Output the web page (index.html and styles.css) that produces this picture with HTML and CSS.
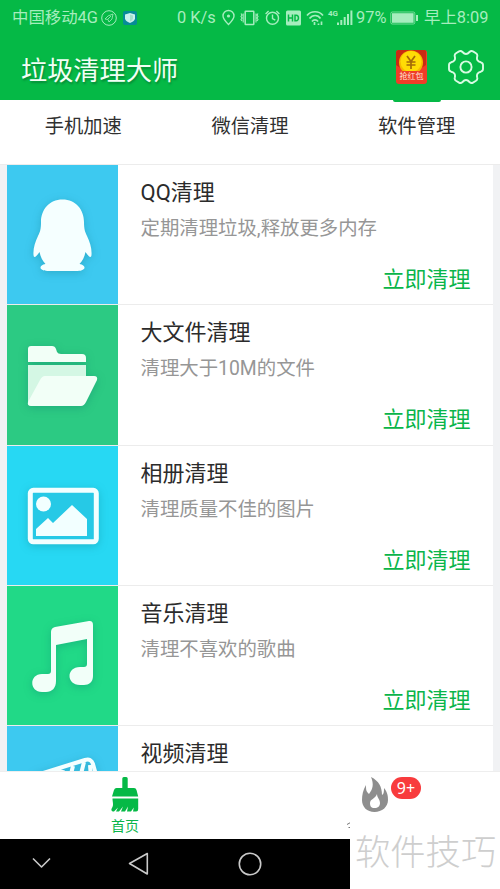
FILE: index.html
```html
<!DOCTYPE html>
<html lang="zh-CN">
<head>
<meta charset="utf-8">
<title>垃圾清理大师</title>
<link rel="stylesheet" href="styles.css">
</head>
<body>
<div class="phone">
  <header class="header">
    <div class="status">
      <span>中国移动4G</span>
      <svg width="17" height="18" viewBox="0 0 17 18" fill="none" stroke="currentColor"><circle cx="8" cy="9" r="7.300"/><path d="M12 5 7 7 4 10l3 .5L8 13l3-3zM7 10l3-3" stroke-width=".8"/></svg>
      <svg width="16" height="18" viewBox="0 0 16 18"><rect x="1" y="2" width="14" height="14" rx="2" fill="#078b97"/><path d="M8 4l5 1.500v3.800c0 2-2 3.600-5 4.800-3-1.200-5-2.800-5-4.800V5.500z" fill="#c9f1ed"/><path d="M8 5.500v7c2-1 3-2 3-3.500V6.500z" fill="#a4dfcd"/></svg>
      <span>0 K/s</span>
      <svg width="14" height="18" viewBox="0 0 14 18" fill="none" stroke="currentColor" stroke-width="1.400"><path d="M6.500 15.500C3 12 1 9.500 1 7a5.500 5.500 0 0 1 11 0c0 2.500-2 5-5.500 8.500z"/><circle cx="6.500" cy="7" r="1.600" fill="currentColor" stroke="none"/></svg>
      <svg width="19" height="18" viewBox="0 0 19 18" fill="none" stroke="currentColor" stroke-width="1.500"><rect x="5.200" y="2.200" width="8.600" height="13.300" rx=".5"/><path d="M1 4.500l1 1.500-1 1.500L2 9l-1 1.500L2 12M3.200 4.500v9M18 4.500L17 6l1 1.500L17 9l1 1.500-1 1.500M16 4.500v9" stroke-width="1.100"/></svg>
      <svg width="16" height="18" viewBox="0 0 16 18" fill="none" stroke="currentColor" stroke-width="1.400"><circle cx="7.500" cy="9.300" r="6"/><path d="M7.500 5.500v4l2.800 1.700M.6 5l3-3M14.400 5l-3-3"/></svg>
      <svg width="16" height="18" viewBox="0 0 16 18"><rect y="1.500" width="15" height="15" rx="1.500" fill="currentColor"/><path d="M2.500 5.500v7M6.500 5.500v7M2.500 9h4M9 6.200h1.200c3 0 3 5.600 0 5.600H9z" fill="none" stroke="#05b946" stroke-width="1.500"/></svg>
      <svg width="19" height="18" viewBox="0 0 19 18" fill="none" stroke="currentColor" stroke-width="1.700"><path d="M1 6.500c4-5 12-5 16 0M3.500 9.500c3-4 8.500-4 11 0M6 12.500c1.500-2.300 4.500-2.300 6 0"/><path d="M8.500 13v3M12.500 14.500v1.500M15.500 12.500V16"/></svg>
      <div class="signal"><small>4G</small><svg width="18" height="18" viewBox="0 0 18 18" fill="currentColor"><path d="M0 13.500h2V16h-2zM3.300 11h2v5h-2zM6.700 8h2v8h-2zM10 5h2v11h-2zM13.400 1.500h2V16h-2z"/></svg></div>
      <span>97%</span>
      <svg width="29" height="18" viewBox="0 0 29 18"><rect x=".8" y="3" width="24" height="12" rx="1.500" fill="none" stroke="currentColor" stroke-opacity=".7"/><rect x="2" y="4.200" width="21.600" height="9.600" fill="currentColor"/><path d="M26 6h2v6h-2z" fill="currentColor"/></svg>
      <span>早上8:09</span>
    </div>
    <div class="appbar">
      <h1>垃圾清理大师</h1>
      <div class="packet"><svg width="30" height="21" viewBox="0 0 30 21"><path d="M0 0h30v15c-7 6-23 6-30 0z" fill="#c92b13"/><circle cx="15" cy="12.500" r="12" fill="#f6b800"/><circle cx="15" cy="11.500" r="10.500" fill="#ffdc05"/><path d="M11 6l4 5.500L19 6M10.500 12h9M10.500 15h9M15 11.500V19" fill="none" stroke="#a56b08" stroke-width="1.700"/></svg><span>抢红包</span></div>
      <svg class="gear" width="36" height="36" viewBox="0 0 36 36" fill="none" stroke="#d8fbe2" stroke-width="1.900" stroke-linejoin="round"><path d="M14.500 3Q18 7 21.500 3Q23.200 1.200 25 2.400L28 4.200Q29.800 5.400 29.200 7.500Q28 12.300 32.800 13.300Q35 14 35 16V20Q35 22 32.800 22.700Q28 23.700 29.200 28.500Q29.800 30.600 28 31.800L25 33.600Q23.200 34.800 21.500 33Q18 29 14.500 33Q12.800 34.800 11 33.600L8 31.800Q6.200 30.600 6.800 28.500Q8 23.700 3.200 22.700Q1 22 1 20V16Q1 14 3.200 13.300Q8 12.300 6.800 7.500Q6.200 5.400 8 4.200L11 2.400Q12.800 1.200 14.500 3z"/><circle cx="18" cy="18" r="5.600"/></svg>
    </div>
  </header>
  <nav class="tools"><span>手机加速</span><span>微信清理</span><span class="marked">软件管理</span></nav>
  <main class="list">
    <section class="row">
      <div class="tile blue"><svg width="111" height="139" viewBox="0 0 111 139" fill="#f5ffff"><path d="M55.500 34.500C42 34.500 34 45 34 57c0 7-1 10-3 14-3 6-5 13-4.500 19 .3 3 2 3 6-3 1 5 3 9 6 12-7 1-7 7 2 7h30c9 0 9-6 2-7 3-3 5-7 6-12 4 6 5.700 6 6 3 .5-6-1.500-13-4.500-19-2-4-3-7-3-14 0-12-8-22.500-21.500-22.500z"/></svg></div>
      <div class="info"><h2>QQ清理</h2><p>定期清理垃圾,释放更多内存</p><a>立即清理</a></div>
    </section>
    <section class="row">
      <div class="tile green"><svg width="111" height="139" viewBox="0 0 111 139" fill="#f2fff7"><path d="M21 57V44q0-3 3-3h21q3 0 4 3l1 3q1 2 4 2h21q4 0 4 4v4z"/><path d="M21 60h58v15H43q-4 0-6 4L21 99z" fill="#d4f7e4"/><path d="M38 71h49q4 0 3 4L79 97q-2 4-5 4H24q-4 0-3-4l12-22q2-4 5-4z"/></svg></div>
      <div class="info"><h2>大文件清理</h2><p>清理大于10M的文件</p><a>立即清理</a></div>
    </section>
    <section class="row">
      <div class="tile cyan"><svg width="111" height="139" viewBox="0 0 111 139" fill="#f2ffff"><rect x="23.300" y="44.300" width="66" height="51.500" rx="3" fill="#26c9e6" stroke="#f2ffff" stroke-width="5"/><circle cx="36.500" cy="58" r="7.500"/><path d="M29 90V83l12-11 5 5 19-18 15 14v17z"/></svg></div>
      <div class="info"><h2>相册清理</h2><p>清理质量不佳的图片</p><a>立即清理</a></div>
    </section>
    <section class="row">
      <div class="tile mint"><svg width="111" height="139" viewBox="0 0 111 139" fill="#f2fff9"><path fill-rule="evenodd" d="M44 46q0-4 4-5l34-6q4-.5 4 4v51c0 6-4 9-9 9h-4c-14 0-14-18 0-18h4q3 0 3-3V53l-31 6v36c0 7-4 11-10 11h-4c-13 0-13-18 0-18h6q3 0 3-3z"/></svg></div>
      <div class="info"><h2>音乐清理</h2><p>清理不喜欢的歌曲</p><a>立即清理</a></div>
    </section>
    <section class="row">
      <div class="tile blue"><svg width="111" height="139" viewBox="0 0 111 139" fill="none" stroke="#f5ffff" stroke-width="4"><path d="M30 49 78 34q6-2 8 4l5 18-54 15z"/><path d="M37 49l15-5-2 8zM56 44l-2 8M66 40l-3 12M77 36l-4 16M83 39l1 13"/></svg></div>
      <div class="info"><h2>视频清理</h2></div>
    </section>
  </main>
  <nav class="tabs">
    <div class="tab active">
      <svg width="30" height="36" viewBox="0 0 30 36" fill="#05b946"><path d="M12.300 1.500q0-1.500 1.500-1.500h2.400q1.500 0 1.500 1.500V11H24q2 0 2.500 2l1.700 6.500H2L4 13q.7-2 2.500-2h5.800zM2.500 21.500h25.700V32q0 2.500-2 2.500H23l.8-4-2.800 4h-4l1-5-3 5h-4l2-5-4 5H6l2-4-4 4c-3 0-3-2-2-3.500C4 28 2.500 25 2.500 21.500z"/></svg>
      <span>首页</span>
    </div>
    <div class="tab hot">
      <svg width="28" height="36" viewBox="0 0 28 36"><path d="M10 0c8 4 11 10 11 18 2-1 2-4 2-7 4 5 4 9 4 12 0 7-6 12-13.500 12S1 30 1 23C1 18 2 13 5 8c0 5 0 6 3 9 4-5 5-10 2-17z" fill="#8e8e8e"/><path d="M16 17c0 4 3 5 3 9 0 3-2 5-5.500 5S9 29 9 26c0-4 5-4 7-9z" fill="#fff"/></svg>
      <span class="badge">9+</span>
      <svg class="sliver" width="3" height="8" viewBox="0 0 3 8" fill="none" stroke="#777"><path d="M0 2.500 3 .8M1.500 5.500H3"/></svg>
    </div>
  </nav>
  <footer class="keys">
    <svg width="350" height="50" viewBox="0 0 350 50" fill="none" stroke="#c9c9c9" stroke-width="1.600"><path d="M33 19.500l8.500 8.500L50 19.500M147.300 14.500v20.500L129.500 24.500z" stroke-linejoin="round"/><circle cx="250" cy="25" r="10.700"/></svg>
  </footer>
  <div class="watermark">软件技巧</div>
</div>
</body>
</html>
```

FILE: styles.css
```css
* { box-sizing: border-box; }
body, h1, h2, p { margin: 0; }
body { font-family: Roboto, "Noto Sans CJK SC", sans-serif; background: #fff; }
svg { display: block; flex: none; }
.phone { position: relative; width: 500px; height: 889px; overflow: hidden; display: flex; flex-direction: column; }
.header { height: 100px; flex: none; background: #05b946; }
.status { display: grid; grid-template-columns: 89px 21px 55px 45px 18px 25px 21px 20px 22px 28px 34px 34px 71px; align-items: center; height: 34px; padding-left: 12px; color: #a6edbe; font-size: 16.4px; line-height: 34px; white-space: nowrap; }
.status span { padding-top: 1px; }
.signal { position: relative; padding-left: 9px; }
.signal small { position: absolute; left: 0; top: 0; font-size: 8px; font-weight: 700; line-height: 9px; }
.appbar { display: flex; align-items: center; height: 66px; padding: 0 16px 0 21px; }
h1 { flex: 1; font-size: 26.2px; font-weight: 400; line-height: 40px; margin-top: 7px; color: #f2fff5; text-shadow: 1px 2px 2px #078b38; }
.packet { width: 31px; height: 34px; background: #ef3d28; border-radius: 3px; overflow: hidden; margin-right: 21px; }
.packet span { display: block; font-size: 8px; line-height: 11px; text-align: center; color: #ffe5da; }
.tools { height: 65px; flex: none; display: grid; grid-template-columns: repeat(3, 1fr); border-bottom: 1px solid #ececec; font-size: 19.3px; line-height: 53px; text-align: center; color: #303030; }
.marked::before { content: ""; display: block; width: 48px; height: 1.500px; margin: 0 auto -1.500px; background: #05b946; border-radius: 0 0 3px 3px; }
.list { height: 607px; flex: none; overflow: hidden; padding: 0 7px; background: #f1f2f4; border-bottom: 1px solid #eee; }
.row { display: flex; height: 140.3px; background: #fff; border-bottom: 1.300px solid #ececec; }
.tile { width: 111px; flex: none; }
.tile svg { filter: drop-shadow(0 2px 4px rgba(0, 90, 100, .25)); }
.blue { background: #3dc9f0; }
.green { background: #2cca83; }
.cyan { background: #27d8f3; }
.mint { background: #21d987; }
.info { flex: 1; display: flex; flex-direction: column; padding: 10px 22.500px 0 22.500px; }
h2 { font-size: 22px; font-weight: 400; line-height: 36px; color: #2b2b2b; }
p { font-size: 19.4px; line-height: 36px; color: #969696; }
.info a { align-self: flex-end; font-size: 22px; line-height: 36px; margin-top: 15px; color: #0ab54a; }
.tabs { height: 67px; flex: none; display: grid; grid-template-columns: 1fr 1fr; background: #fff; }
.tab { display: flex; flex-direction: column; align-items: center; padding-top: 5px; }
.tab span { font-size: 14px; line-height: 20px; margin-top: 3px; color: #0ab54a; }
.hot { position: relative; }
.hot .badge { position: absolute; left: 141px; top: 5px; width: 30px; height: 22px; margin: 0; border-radius: 11px; background: #f83b3d; color: #fff; font: 16px/22px "Noto Sans", sans-serif; text-align: center; }
.sliver { position: absolute; left: 97px; top: 50px; }
.keys { height: 50px; flex: none; background: #000; }
.watermark { position: absolute; left: 350px; top: 817px; width: 150px; height: 72px; padding-left: 5px; background: #fff; font-size: 35.3px; font-weight: 300; line-height: 72px; color: #cecece; white-space: nowrap; }
```
